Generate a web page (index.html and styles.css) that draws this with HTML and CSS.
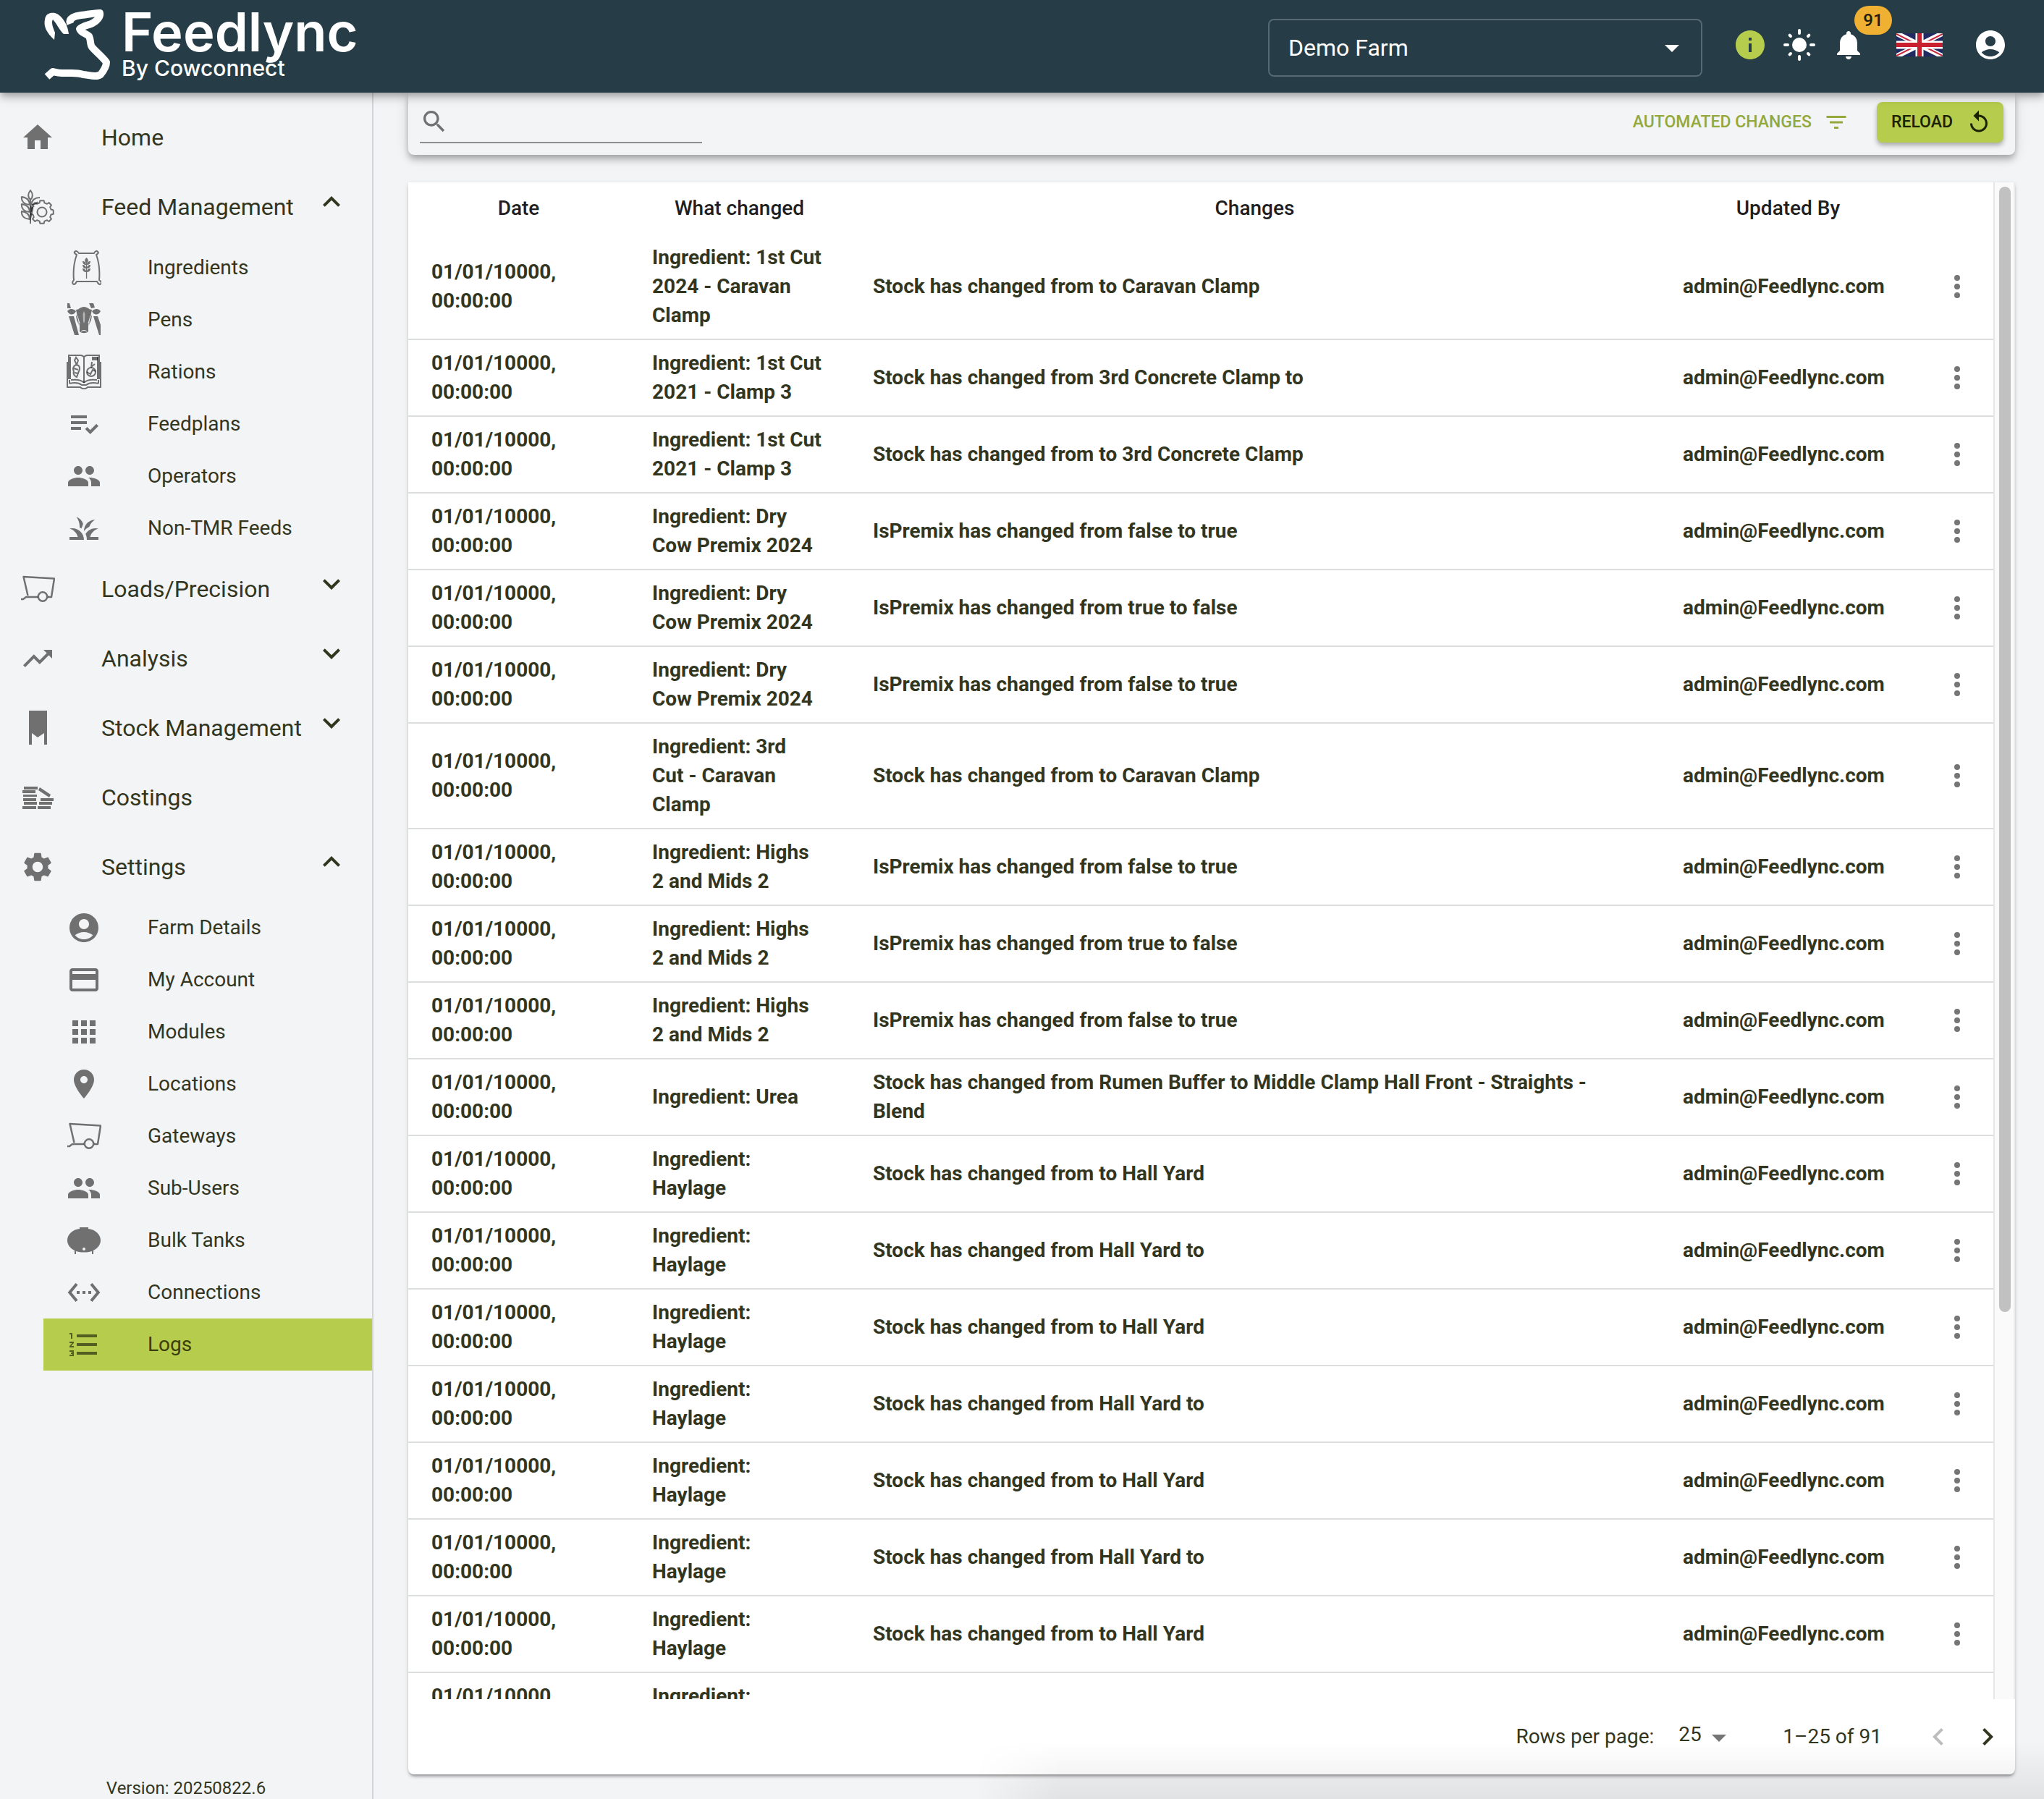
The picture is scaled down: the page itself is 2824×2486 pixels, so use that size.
FILE: index.html
```
<!DOCTYPE html>
<html lang="en">
<head>
    <meta charset="UTF-8">
    <meta name="viewport" content="width=device-width, initial-scale=1.0">
    <title>Feedlync - Logs</title>
    <link rel="stylesheet" href="styles.css">
</head>
<body>
    <!-- Icon set, referenced with <use> -->
    <svg class="sprite" aria-hidden="true">
        <symbol id="i-home" viewBox="0 0 24 24"><path d="M10 20v-6h4v6h5v-8h3L12 3 2 12h3v8z"/></symbol>
        <symbol id="i-feed" viewBox="0 0 48 48">
            <g fill="none" stroke="currentColor" stroke-width="2" stroke-linejoin="round">
                <path d="M14 1c-4 5-4 9 0 13 4-4 4-8 0-13zM14 14v33M13 21C5 20 1 16 2 10c7 1 11 5 11 11zM13 31C5 30 1 26 2 20c7 1 11 5 11 11zM13 41C5 40 1 36 2 30c7 1 11 5 11 11zM15 21c1-6 5-10 12-10M15 21c4 0 7-1 9-4M15 31c0-3 1-6 3-7"/>
                <g transform="translate(30 31)">
                    <path stroke-width="2" d="M15.8-2.7V2.7L12.6 3.4 11.2 7 13 9.6 9.6 13 7 11.2 3.4 12.6 2.7 15.8H-2.7L-3.4 12.6-7 11.2-9.6 13-13 9.6-11.2 7-12.6 3.4-15.8 2.7M-11.2-7-13-9.6-9.6-13-7-11.2-3.4-12.6-2.7-15.8H2.7L3.4-12.6 7-11.2 9.6-13 13-9.6 11.2-7 12.6-3.4 15.8-2.7"/>
                    <circle r="6.5"/>
                </g>
            </g>
            <path d="M14 22c3 1 5 3 4 6l-2 8-2 8z"/>
        </symbol>
        <symbol id="i-sack" viewBox="0 0 48 48">
            <path fill="none" stroke="currentColor" stroke-width="2" stroke-linejoin="round" d="M17 4h21c1-3 4-4 5-2 2 1 0 3-2 4 4 11 5 24 4 35 3 2 4 5 1 6-2 0-3-2-4-4H14c-1 2-2 4-4 4-3-1-2-4 0-6-1-11 0-24 4-35-2-1-4-3-3-4 2-2 4-1 6 2z"/>
            <path d="M27.5 10c3 3 3 5 0 8-3-3-3-5 0-8zM26.9 18h1.3v21h-1.3zM22 15c3 0 5 2 5 5-3 0-5-2-5-5zM33 15c-3 0-5 2-5 5 3 0 5-2 5-5zM22 20c3 0 5 2 5 5-3 0-5-2-5-5zM33 20c-3 0-5 2-5 5 3 0 5-2 5-5zM22 25c3 0 5 2 5 5-3 0-5-2-5-5zM33 25c-3 0-5 2-5 5 3 0 5-2 5-5z"/>
        </symbol>
        <symbol id="i-cow" viewBox="0 0 48 48">
            <path d="M1 1h3l2 7H1zM31 1h6l2 6-5 1zM1 12c3-4 8-4 12 0-3 6-9 6-12 0zM47 12c-3-4-8-4-12 0 3 6 9 6 12 0zM3 19h7l7 26h-6zM37 19h6l4 12v14h-2zM13 10c4 0 6-4 11-4s7 4 11 4l-2 10-3 12v8c-3 3-9 3-12 0v-8l-3-12zM13 18l2 1 2 12-3-7zM35 18l-2 1-2 12 3-7z"/>
            <path class="cut" d="M24 12l1.5 4-.5 10-1 3-1-3-.5-10z"/>
            <path class="cut-line" d="M15 19l3 10M33 19l-3 10M20 40c2-2 6-2 8 0"/>
        </symbol>
        <symbol id="i-book" viewBox="0 0 48 48">
            <g fill="none" stroke="currentColor" stroke-width="2">
                <path d="M3 34V1h16c3 0 5 2 5 3 0-1 2-3 5-3h16v33M24 4v35M1 10v35h18c2 3 8 3 10 0h18V10M5 3v31M43 3v31"/>
                <path d="M24 39c-3-4-9-5-18-4M24 39c3-4 9-5 18-4M4 40c8-2 13-1 17 2h6c4-3 9-4 17-2M4 35v5M44 35v5"/>
                <path d="M13 14c5 0 6 5 4 9l-3 8c-4-2-5-5-4-8-2-3-1-7 3-9zM14 14l-3-6 2-4 3 4zM10 19l6 2M11 25l5 1"/>
                <circle cx="34" cy="24" r="6"/>
                <path d="M34 18l1-8M34 17l5-4M28 24l5 3 3-6 4 2"/>
            </g>
            <path d="M35 3h8v5h-8z"/>
        </symbol>
        <symbol id="i-plan" viewBox="0 0 24 24"><path d="M3 10h11v2H3zM3 6h11v2H3zM3 14h7v2H3zM20.59 11.93l-4.25 4.24-2.12-2.12-1.41 1.41L16.34 19 22 13.34z"/></symbol>
        <symbol id="i-people" viewBox="0 0 24 24"><path d="M16 11c1.66 0 2.99-1.34 2.99-3S17.66 5 16 5s-3 1.34-3 3 1.34 3 3 3zm-8 0c1.66 0 2.99-1.34 2.99-3S9.66 5 8 5 5 6.34 5 8s1.34 3 3 3zm0 2c-2.33 0-7 1.17-7 3.5V19h14v-2.5c0-2.33-4.67-3.5-7-3.5zm8 0c-.29 0-.62.02-.97.05 1.16.84 1.97 1.97 1.97 3.45V19h6v-2.5c0-2.33-4.67-3.5-7-3.5z"/></symbol>
        <symbol id="i-grass" viewBox="0 0 24 24"><path d="M12 20H2v-2h5.75C7.02 15.19 4.81 12.99 2 12.26 2.64 12.1 3.31 12 4 12c4.42 0 8 3.58 8 8zm10-7.74C21.36 12.1 20.69 12 20 12c-2.93 0-5.48 1.58-6.88 3.93.6 1.25.87 2.65.87 4.07h8v-2h-5.75c.74-2.81 2.95-5.01 5.76-5.74zM15.64 11.02c.78-2.09 2.23-3.84 4.09-5C15.44 6.16 12 9.67 12 14v.02c.95-1.27 2.2-2.3 3.64-3zM11.42 8.85C10.58 6.66 8.88 4.89 6.7 4 8.14 5.86 9 8.18 9 10.71c0 .21-.03.41-.04.61.43.24.83.52 1.22.82.39-.96.86-1.87 1.24-3.29z"/></symbol>
        <symbol id="i-wagon" viewBox="0 0 48 48">
            <g fill="none" stroke="currentColor" stroke-width="2.5" stroke-linejoin="round">
                <path d="M10.500 33L4.500 7 47 9.500 43 35h-5M1 38h3l4-3h16"/>
                <circle cx="31" cy="34.5" r="6.2"/>
            </g>
        </symbol>
        <symbol id="i-trend" viewBox="0 0 24 24"><path d="M16 6l2.29 2.29-4.88 4.88-4-4L2 16.59 3.41 18l6-6 4 4 6.3-6.29L22 12V6z"/></symbol>
        <symbol id="i-stock" viewBox="0 0 48 48"><path d="M12 0h25v47h-4V31l-9 6-8-6v16h-4z"/></symbol>
        <symbol id="i-costs" viewBox="0 0 48 48">
            <path d="M5 9h19v4H5zM3 14h18v4H3zM4 20h19v3H4zM4 25h18v4H4zM5 30h18v4H5zM3 36h19v4H3zM28 25h18v4H28zM26 30h18v4H26zM24 36h18v4H24zM27 10l15 10-2 4-15-10z"/>
        </symbol>
        <symbol id="i-gear" viewBox="0 0 24 24"><path d="M19.14 12.94c.04-.3.06-.61.06-.94s-.02-.64-.07-.94l2.03-1.58c.18-.14.23-.41.12-.61l-1.92-3.32c-.12-.22-.37-.29-.59-.22l-2.39.96c-.5-.38-1.03-.7-1.62-.94l-.36-2.54c-.04-.24-.24-.41-.48-.41h-3.84c-.24 0-.43.17-.47.41l-.36 2.54c-.59.24-1.13.57-1.62.94l-2.39-.96c-.22-.08-.47 0-.59.22L2.74 8.87c-.12.21-.08.47.12.61l2.03 1.58c-.05.3-.09.63-.09.94s.02.64.07.94l-2.03 1.58c-.18.14-.23.41-.12.61l1.92 3.32c.12.22.37.29.59.22l2.39-.96c.5.38 1.03.7 1.62.94l.36 2.54c.05.24.24.41.48.41h3.84c.24 0 .44-.17.47-.41l.36-2.54c.59-.24 1.13-.56 1.62-.94l2.39.96c.22.08.47 0 .59-.22l1.92-3.32c.12-.22.07-.47-.12-.61l-2.01-1.58zM12 15.6c-1.98 0-3.6-1.62-3.6-3.6s1.62-3.6 3.6-3.6 3.6 1.62 3.6 3.6-1.62 3.6-3.6 3.6z"/></symbol>
        <symbol id="i-user" viewBox="0 0 24 24"><path d="M12 2C6.48 2 2 6.48 2 12s4.48 10 10 10 10-4.48 10-10S17.52 2 12 2zm0 4c1.93 0 3.5 1.57 3.5 3.5S13.93 13 12 13s-3.5-1.57-3.5-3.5S10.07 6 12 6zm0 14c-2.03 0-4.43-.82-6.14-2.88C7.55 15.8 9.68 15 12 15s4.45.8 6.14 2.12C16.43 19.18 14.03 20 12 20z"/></symbol>
        <symbol id="i-card" viewBox="0 0 24 24"><path d="M20 4H4c-1.11 0-1.99.89-1.99 2L2 18c0 1.11.89 2 2 2h16c1.11 0 2-.89 2-2V6c0-1.11-.89-2-2-2zm0 14H4v-6h16v6zm0-10H4V6h16v2z"/></symbol>
        <symbol id="i-apps" viewBox="0 0 24 24"><path d="M4 8h4V4H4zm6 12h4v-4h-4zm-6 0h4v-4H4zm0-6h4v-4H4zm6 0h4v-4h-4zm6-10v4h4V4zm-6 4h4V4h-4zm6 6h4v-4h-4zm0 6h4v-4h-4z"/></symbol>
        <symbol id="i-pin" viewBox="0 0 24 24"><path d="M12 2C8.13 2 5 5.13 5 9c0 5.25 7 13 7 13s7-7.75 7-13c0-3.87-3.13-7-7-7zm0 9.500c-1.38 0-2.5-1.12-2.5-2.5s1.12-2.5 2.5-2.5 2.5 1.12 2.5 2.5-1.12 2.5-2.5 2.5z"/></symbol>
        <symbol id="i-tank" viewBox="0 0 48 48"><path fill-rule="evenodd" d="M18 6h12v2c10 1 17 8 17 16 0 6-4 11-10 14v5h-2v-4c-7 2-15 2-22 0v4h-2v-5C5 35 1 30 1 24 1 16 8 9 18 8zM24 34a2 2 0 1 0 0 4 2 2 0 0 0 0-4z"/></symbol>
        <symbol id="i-link" viewBox="0 0 24 24"><path d="M7.77 6.76L6.23 5.48.82 12l5.41 6.52 1.54-1.28L3.42 12zM7 13h2v-2H7zm10-2h-2v2h2zm-6 2h2v-2h-2zm6.77-7.52l-1.54 1.28L20.58 12l-4.35 5.24 1.54 1.28L23.18 12z"/></symbol>
        <symbol id="i-list" viewBox="0 0 24 24"><path d="M2 17h2v.5H3v1h1v.5H2v1h3v-4H2zm1-9h1V4H2v1h1zm-1 3h1.8L2 13.1v.9h3v-1H3.2L5 10.9V10H2zm5-6v2h14V5zm0 14h14v-2H7zm0-6h14v-2H7z"/></symbol>
        <symbol id="i-up" viewBox="0 0 24 24"><path d="M12 8l-6 6 1.41 1.41L12 10.83l4.59 4.58L18 14z"/></symbol>
        <symbol id="i-down" viewBox="0 0 24 24"><path d="M16.59 8.59L12 13.17 7.41 8.59 6 10l6 6 6-6z"/></symbol>
        <symbol id="i-left" viewBox="0 0 24 24"><path d="M15.41 7.41L14 6l-6 6 6 6 1.41-1.41L10.83 12z"/></symbol>
        <symbol id="i-right" viewBox="0 0 24 24"><path d="M10 6L8.59 7.41 13.17 12l-4.58 4.59L10 18l6-6z"/></symbol>
        <symbol id="i-drop" viewBox="0 0 24 24"><path d="M7 10l5 5 5-5z"/></symbol>
        <symbol id="i-info" viewBox="0 0 24 24"><path d="M12 2C6.48 2 2 6.48 2 12s4.48 10 10 10 10-4.48 10-10S17.52 2 12 2zm1 15h-2v-6h2zm0-8h-2V7h2z"/></symbol>
        <symbol id="i-sun" viewBox="0 0 24 24">
            <circle cx="12" cy="12" r="5"/>
            <path fill="none" stroke="currentColor" stroke-width="2" stroke-linecap="round" d="M12 2v2M12 20v2M2 12h2M20 12h2M5.3 5.3l.7.7M18 18l.7.7M5.3 18.7l.7-.7M18 6l.7-.7"/>
        </symbol>
        <symbol id="i-bell" viewBox="0 0 24 24"><path d="M12 22c1.1 0 2-.9 2-2h-4c0 1.1.89 2 2 2zm6-6v-5c0-3.07-1.64-5.64-4.5-6.32V4c0-.83-.67-1.5-1.5-1.5s-1.5.67-1.5 1.5v.68C7.63 5.36 6 7.92 6 11v5l-2 2v1h16v-1z"/></symbol>
        <symbol id="i-search" viewBox="0 0 24 24"><path d="M15.5 14h-.79l-.28-.27C15.41 12.59 16 11.11 16 9.5 16 5.91 13.09 3 9.5 3S3 5.91 3 9.5 5.91 16 9.5 16c1.61 0 3.09-.59 4.23-1.57l.27.28v.79l5 4.99L20.49 19zm-6 0C7.01 14 5 11.99 5 9.5S7.01 5 9.5 5 14 7.01 14 9.5 11.99 14 9.5 14z"/></symbol>
        <symbol id="i-filter" viewBox="0 0 24 24"><path d="M10 18h4v-2h-4zM3 6v2h18V6zm3 7h12v-2H6z"/></symbol>
        <symbol id="i-reload" viewBox="0 0 24 24"><path d="M12 5V1L7 6l5 5V7c3.31 0 6 2.69 6 6s-2.69 6-6 6-6-2.69-6-6H4c0 4.42 3.58 8 8 8s8-3.58 8-8-3.58-8-8-8z"/></symbol>
        <symbol id="i-more" viewBox="0 0 24 24"><circle cx="12" cy="6" r="2"/><circle cx="12" cy="12" r="2"/><circle cx="12" cy="18" r="2"/></symbol>
    </svg>

    <header class="topbar">
        <a class="brand" href="#" aria-label="Feedlync home">
            <svg class="brand-mark" viewBox="60 12 96 100" aria-hidden="true">
                <path d="M75 55C64 45 60 36 62 27c1-8 7-10 14-9 10 3 18 17 19 29h-7c-6-5-9-14-15-20-2 3-1 9 3 18z"/>
                <path class="brand-line" d="M97 33c-3-8 7-11 15-12 10-1 18-3 26-3 1 5-4 11-10 14-6 3-14 4-18 8 2 6 9 6 13 10 3 6 1 11 4 15 6 7 14 13 20 21 0 6-4 12-8 17-5 4-15 1-24 0-15-5-25 1-42-4l-8 7"/>
            </svg>
            <span class="brand-text">
                <span class="brand-name">Feedlync</span>
                <span class="brand-sub">By Cowconnect</span>
            </span>
        </a>
        <div class="farm-select">
            <select aria-label="Farm">
                <option>Demo Farm</option>
            </select>
            <svg class="icon" aria-hidden="true"><use href="#i-drop"/></svg>
        </div>
        <div class="top-actions">
            <div class="action-group">
                <button class="icon-btn info" aria-label="Information"><svg class="icon"><use href="#i-info"/></svg></button>
                <button class="icon-btn" aria-label="Theme"><svg class="icon"><use href="#i-sun"/></svg></button>
                <button class="icon-btn" aria-label="Notifications"><svg class="icon"><use href="#i-bell"/></svg><span class="badge">91</span></button>
            </div>
            <button class="icon-btn" aria-label="Language">
                <svg class="flag" viewBox="0 0 64 32">
                    <path fill="#1f2a63" d="M0 0h64v32H0z"/>
                    <path stroke="#fff" stroke-width="7" d="M0 0l64 32M64 0L0 32"/>
                    <path stroke="#c8283c" stroke-width="2" d="M0 1l28 14M64 1L38 14M36 17l28 14M28 17L0 31"/>
                    <path stroke="#fff" stroke-width="11" d="M32 0v32M0 16h64"/>
                    <path stroke="#c8202f" stroke-width="6" d="M32 0v32M0 16h64"/>
                </svg>
            </button>
            <button class="icon-btn" aria-label="Profile"><svg class="icon"><use href="#i-user"/></svg></button>
        </div>
    </header>

    <div class="layout">
        <nav class="sidebar">
            <ul class="menu">
                <li><a class="item" href="#"><svg class="icon"><use href="#i-home"/></svg><span>Home</span></a></li>
                <li>
                    <a class="item" href="#"><svg class="icon"><use href="#i-feed"/></svg><span>Feed Management</span><svg class="icon chevron"><use href="#i-up"/></svg></a>
                    <ul class="submenu">
                        <li><a href="#"><svg class="icon"><use href="#i-sack"/></svg>Ingredients</a></li>
                        <li><a href="#"><svg class="icon"><use href="#i-cow"/></svg>Pens</a></li>
                        <li><a href="#"><svg class="icon"><use href="#i-book"/></svg>Rations</a></li>
                        <li><a href="#"><svg class="icon"><use href="#i-plan"/></svg>Feedplans</a></li>
                        <li><a href="#"><svg class="icon"><use href="#i-people"/></svg>Operators</a></li>
                        <li><a href="#"><svg class="icon"><use href="#i-grass"/></svg>Non-TMR Feeds</a></li>
                    </ul>
                </li>
                <li><a class="item" href="#"><svg class="icon"><use href="#i-wagon"/></svg><span>Loads/Precision</span><svg class="icon chevron"><use href="#i-down"/></svg></a></li>
                <li><a class="item" href="#"><svg class="icon"><use href="#i-trend"/></svg><span>Analysis</span><svg class="icon chevron"><use href="#i-down"/></svg></a></li>
                <li><a class="item" href="#"><svg class="icon"><use href="#i-stock"/></svg><span>Stock Management</span><svg class="icon chevron"><use href="#i-down"/></svg></a></li>
                <li><a class="item" href="#"><svg class="icon"><use href="#i-costs"/></svg><span>Costings</span></a></li>
                <li>
                    <a class="item" href="#"><svg class="icon"><use href="#i-gear"/></svg><span>Settings</span><svg class="icon chevron"><use href="#i-up"/></svg></a>
                    <ul class="submenu">
                        <li><a href="#"><svg class="icon"><use href="#i-user"/></svg>Farm Details</a></li>
                        <li><a href="#"><svg class="icon"><use href="#i-card"/></svg>My Account</a></li>
                        <li><a href="#"><svg class="icon"><use href="#i-apps"/></svg>Modules</a></li>
                        <li><a href="#"><svg class="icon"><use href="#i-pin"/></svg>Locations</a></li>
                        <li><a href="#"><svg class="icon"><use href="#i-wagon"/></svg>Gateways</a></li>
                        <li><a href="#"><svg class="icon"><use href="#i-people"/></svg>Sub-Users</a></li>
                        <li><a href="#"><svg class="icon"><use href="#i-tank"/></svg>Bulk Tanks</a></li>
                        <li><a href="#"><svg class="icon"><use href="#i-link"/></svg>Connections</a></li>
                        <li><a class="active" href="#"><svg class="icon"><use href="#i-list"/></svg>Logs</a></li>
                    </ul>
                </li>
            </ul>
            <p class="version">Version: 20250822.6</p>
        </nav>

        <main class="content">
            <div class="toolbar">
                <label class="search">
                    <svg class="icon"><use href="#i-search"/></svg>
                    <input type="text" aria-label="Search">
                </label>
                <div class="toolbar-actions">
                    <button class="btn-text">AUTOMATED CHANGES<svg class="icon"><use href="#i-filter"/></svg></button>
                    <button class="btn-reload">RELOAD<svg class="icon"><use href="#i-reload"/></svg></button>
                </div>
            </div>

            <section class="card">
                <div class="table-area">
                    <div class="table-scroll">
                        <table>
                            <colgroup>
                                <col class="col-date"><col class="col-what"><col><col class="col-user"><col class="col-menu">
                            </colgroup>
                            <thead>
                                <tr><th>Date</th><th>What changed</th><th>Changes</th><th>Updated By</th><th></th></tr>
                            </thead>
                            <tbody>
                                <tr><td>01/01/10000, 00:00:00</td><td>Ingredient: 1st Cut 2024 - Caravan Clamp</td><td>Stock has changed from to Caravan Clamp</td><td>admin@Feedlync.com</td><td><button aria-label="More"><svg class="icon"><use href="#i-more"/></svg></button></td></tr>
                                <tr><td>01/01/10000, 00:00:00</td><td>Ingredient: 1st Cut 2021 - Clamp 3</td><td>Stock has changed from 3rd Concrete Clamp to</td><td>admin@Feedlync.com</td><td><button aria-label="More"><svg class="icon"><use href="#i-more"/></svg></button></td></tr>
                                <tr><td>01/01/10000, 00:00:00</td><td>Ingredient: 1st Cut 2021 - Clamp 3</td><td>Stock has changed from to 3rd Concrete Clamp</td><td>admin@Feedlync.com</td><td><button aria-label="More"><svg class="icon"><use href="#i-more"/></svg></button></td></tr>
                                <tr><td>01/01/10000, 00:00:00</td><td>Ingredient: Dry Cow Premix 2024</td><td>IsPremix has changed from false to true</td><td>admin@Feedlync.com</td><td><button aria-label="More"><svg class="icon"><use href="#i-more"/></svg></button></td></tr>
                                <tr><td>01/01/10000, 00:00:00</td><td>Ingredient: Dry Cow Premix 2024</td><td>IsPremix has changed from true to false</td><td>admin@Feedlync.com</td><td><button aria-label="More"><svg class="icon"><use href="#i-more"/></svg></button></td></tr>
                                <tr><td>01/01/10000, 00:00:00</td><td>Ingredient: Dry Cow Premix 2024</td><td>IsPremix has changed from false to true</td><td>admin@Feedlync.com</td><td><button aria-label="More"><svg class="icon"><use href="#i-more"/></svg></button></td></tr>
                                <tr><td>01/01/10000, 00:00:00</td><td>Ingredient: 3rd<br>Cut - Caravan Clamp</td><td>Stock has changed from to Caravan Clamp</td><td>admin@Feedlync.com</td><td><button aria-label="More"><svg class="icon"><use href="#i-more"/></svg></button></td></tr>
                                <tr><td>01/01/10000, 00:00:00</td><td>Ingredient: Highs 2 and Mids 2</td><td>IsPremix has changed from false to true</td><td>admin@Feedlync.com</td><td><button aria-label="More"><svg class="icon"><use href="#i-more"/></svg></button></td></tr>
                                <tr><td>01/01/10000, 00:00:00</td><td>Ingredient: Highs 2 and Mids 2</td><td>IsPremix has changed from true to false</td><td>admin@Feedlync.com</td><td><button aria-label="More"><svg class="icon"><use href="#i-more"/></svg></button></td></tr>
                                <tr><td>01/01/10000, 00:00:00</td><td>Ingredient: Highs 2 and Mids 2</td><td>IsPremix has changed from false to true</td><td>admin@Feedlync.com</td><td><button aria-label="More"><svg class="icon"><use href="#i-more"/></svg></button></td></tr>
                                <tr><td>01/01/10000, 00:00:00</td><td>Ingredient: Urea</td><td>Stock has changed from Rumen Buffer to Middle Clamp Hall Front - Straights - Blend</td><td>admin@Feedlync.com</td><td><button aria-label="More"><svg class="icon"><use href="#i-more"/></svg></button></td></tr>
                                <tr><td>01/01/10000, 00:00:00</td><td>Ingredient: Haylage</td><td>Stock has changed from to Hall Yard</td><td>admin@Feedlync.com</td><td><button aria-label="More"><svg class="icon"><use href="#i-more"/></svg></button></td></tr>
                                <tr><td>01/01/10000, 00:00:00</td><td>Ingredient: Haylage</td><td>Stock has changed from Hall Yard to</td><td>admin@Feedlync.com</td><td><button aria-label="More"><svg class="icon"><use href="#i-more"/></svg></button></td></tr>
                                <tr><td>01/01/10000, 00:00:00</td><td>Ingredient: Haylage</td><td>Stock has changed from to Hall Yard</td><td>admin@Feedlync.com</td><td><button aria-label="More"><svg class="icon"><use href="#i-more"/></svg></button></td></tr>
                                <tr><td>01/01/10000, 00:00:00</td><td>Ingredient: Haylage</td><td>Stock has changed from Hall Yard to</td><td>admin@Feedlync.com</td><td><button aria-label="More"><svg class="icon"><use href="#i-more"/></svg></button></td></tr>
                                <tr><td>01/01/10000, 00:00:00</td><td>Ingredient: Haylage</td><td>Stock has changed from to Hall Yard</td><td>admin@Feedlync.com</td><td><button aria-label="More"><svg class="icon"><use href="#i-more"/></svg></button></td></tr>
                                <tr><td>01/01/10000, 00:00:00</td><td>Ingredient: Haylage</td><td>Stock has changed from Hall Yard to</td><td>admin@Feedlync.com</td><td><button aria-label="More"><svg class="icon"><use href="#i-more"/></svg></button></td></tr>
                                <tr><td>01/01/10000, 00:00:00</td><td>Ingredient: Haylage</td><td>Stock has changed from to Hall Yard</td><td>admin@Feedlync.com</td><td><button aria-label="More"><svg class="icon"><use href="#i-more"/></svg></button></td></tr>
                                <tr><td>01/01/10000, 00:00:00</td><td>Ingredient: Haylage</td><td></td><td></td><td></td></tr>
                            </tbody>
                        </table>
                    </div>
                    <div class="scrollbar"><div class="thumb"></div></div>
                </div>
                <div class="pagination">
                    <label for="rows">Rows per page:</label>
                    <div class="rows-select">
                        <select id="rows">
                            <option>25</option>
                        </select>
                        <svg class="icon" aria-hidden="true"><use href="#i-drop"/></svg>
                    </div>
                    <span class="range">1–25 of 91</span>
                    <div class="pager">
                        <button disabled aria-label="Previous page"><svg class="icon"><use href="#i-left"/></svg></button>
                        <button aria-label="Next page"><svg class="icon"><use href="#i-right"/></svg></button>
                    </div>
                </div>
            </section>
        </main>
    </div>
</body>
</html>
```
FILE: styles.css
```
* {
    box-sizing: border-box;
}
body {
    margin: 0;
    height: 100vh;
    display: flex;
    flex-direction: column;
    overflow: hidden;
    font-family: Roboto, "Liberation Sans", sans-serif;
    font-size: 28px;
    line-height: 40px;
    color: #33361f;
    background-color: #f3f4f6;
}
button, select, input {
    font: inherit;
    color: inherit;
    background: none;
    border: none;
    padding: 0;
}
button {
    display: flex;
    align-items: center;
    cursor: pointer;
}
a {
    color: inherit;
    text-decoration: none;
}
ul {
    list-style: none;
    margin: 0;
    padding: 0;
}
select {
    appearance: none;
}
.sprite {
    position: absolute;
    width: 0;
    height: 0;
}
.icon {
    width: 48px;
    height: 48px;
    flex: none;
    fill: currentColor;
}
.cut {
    fill: #b4b5b6;
}
.cut-line {
    fill: none;
    stroke: #f3f4f6;
}

/* Top bar */
.topbar {
    position: relative;
    z-index: 2;
    flex: none;
    height: 128px;
    display: flex;
    align-items: center;
    padding: 0 50px 0 60px;
    background-color: #263d47;
    color: #fff;
    box-shadow: 0 4px 8px -2px rgba(0,0,0,0.2), 0 8px 10px rgba(0,0,0,0.14), 0 2px 20px rgba(0,0,0,0.12);
}
.brand {
    display: flex;
    gap: 12px;
    height: 104px;
    margin-right: auto;
}
.brand-mark {
    width: 96px;
    height: 100px;
    fill: #fff;
}
.brand-line {
    fill: none;
    stroke: #fff;
    stroke-width: 10;
    stroke-linejoin: round;
}
.brand-text {
    display: flex;
    flex-direction: column;
    font-family: Inter, sans-serif;
    font-weight: 500;
}
.brand-name {
    font-size: 74px;
    line-height: 64px;
    font-weight: 600;
}
.brand-sub {
    font-size: 30px;
    line-height: 36px;
}
.farm-select {
    position: relative;
    width: 600px;
    margin: 4px 42px 0 0;
}
.farm-select select {
    width: 100%;
    height: 80px;
    padding: 0 26px;
    font-size: 32px;
    border: 2px solid #566871;
    border-radius: 8px;
}
.farm-select .icon {
    position: absolute;
    right: 18px;
    top: 16px;
    pointer-events: none;
}
.top-actions {
    display: flex;
    align-items: center;
    gap: 42px;
    margin-bottom: 4px;
}
.action-group {
    display: flex;
    gap: 20px;
}
.icon-btn {
    position: relative;
}
.info {
    color: #b6cc4c;
}
.badge {
    position: absolute;
    left: 32px;
    top: -30px;
    width: 52px;
    height: 40px;
    border-radius: 20px;
    background-color: #f0b032;
    color: #221c08;
    font-size: 24px;
    font-weight: 500;
    text-align: center;
}
.flag {
    width: 64px;
    height: 32px;
}

/* Sidebar */
.layout {
    flex: 1;
    min-height: 0;
    display: flex;
}
.sidebar {
    width: 516px;
    flex: none;
    display: flex;
    flex-direction: column;
    justify-content: space-between;
    padding-top: 14px;
    border-right: 2px solid #d2d4d7;
}
.item {
    display: flex;
    align-items: center;
    height: 96px;
    padding: 0 32px 0 28px;
    font-size: 32px;
}
.item span {
    margin: 0 auto 0 64px;
}
.item .icon, .submenu .icon {
    color: rgba(0,0,0,0.54);
}
.item .chevron {
    color: #33361f;
    margin-bottom: 14px;
}
.submenu a {
    display: flex;
    align-items: center;
    gap: 64px;
    height: 72px;
    margin-left: 60px;
    padding-left: 32px;
}
.submenu .active {
    background-color: #b6cc4c;
    color: #3a400d;
}
.version {
    margin: 0;
    font-size: 24px;
    line-height: 30px;
    text-align: center;
}

/* Toolbar */
.content {
    position: relative;
    flex: 1;
    min-width: 0;
    display: flex;
    flex-direction: column;
    padding: 0 40px 34px 48px;
}
/* soft shade along the bottom edge */
.content::after {
    content: "";
    position: absolute;
    left: 36%;
    right: 0;
    bottom: 0;
    height: 80px;
    background: linear-gradient(to bottom, rgba(0,0,0,0), rgba(0,0,0,0.07));
    mask-image: linear-gradient(to right, transparent, #000 120px);
    pointer-events: none;
}
.toolbar {
    display: flex;
    justify-content: space-between;
    align-items: center;
    padding: 12px 16px 16px;
    margin-bottom: 38px;
    border-radius: 0 0 8px 8px;
    box-shadow: 0 4px 8px -2px rgba(0,0,0,0.2), 0 8px 10px rgba(0,0,0,0.14), 0 2px 20px rgba(0,0,0,0.12);
}
.search {
    display: flex;
    align-items: center;
    width: 390px;
    height: 58px;
    border-bottom: 2px solid #8d8f91;
    color: #707172;
}
.search .icon {
    width: 40px;
    height: 40px;
}
.search input {
    flex: 1;
    min-width: 0;
    outline: none;
}
.toolbar-actions {
    display: flex;
    gap: 38px;
    font-size: 23px;
    font-weight: 500;
}
.toolbar-actions .icon {
    width: 36px;
    height: 36px;
}
.btn-text {
    gap: 16px;
    color: #94a93c;
}
.btn-reload {
    height: 56px;
    gap: 18px;
    padding: 0 16px 0 20px;
    border-radius: 8px;
    background-color: #b6cc4c;
    color: #1c2004;
    box-shadow: 0 4px 6px rgba(0,0,0,0.3);
}

/* Log table */
.card {
    flex: 1;
    min-height: 0;
    display: flex;
    flex-direction: column;
    background-color: #fff;
    border-radius: 0 0 8px 8px;
    box-shadow: 0 4px 4px -2px rgba(0,0,0,0.4), 0 2px 6px rgba(0,0,0,0.12);
}
.table-area {
    flex: 1;
    min-height: 0;
    display: flex;
}
.table-scroll {
    flex: 1;
    overflow: hidden;
}
table {
    width: 100%;
    table-layout: fixed;
    border-collapse: separate;
    border-spacing: 0;
}
.col-date, .col-what {
    width: 305px;
}
.col-user {
    width: 355px;
}
.col-menu {
    width: 106px;
}
th {
    height: 72px;
    padding: 0;
    font-weight: 500;
    color: #1f1f1f;
}
td {
    padding: 12px 32px;
    border-bottom: 2px solid #dcdddd;
    font-weight: 700;
}
td:nth-child(2) {
    padding-right: 36px;
}
td:last-child {
    padding: 0 0 0 32px;
}
td button {
    color: #757575;
}
.scrollbar {
    width: 30px;
    padding: 6px;
    background-color: #fafafa;
    border-left: 2px solid #e7e7e7;
    border-right: 2px solid #ececec;
}
.thumb {
    width: 16px;
    height: calc(75% - 8px);
    border-radius: 8px;
    background-color: #c1c1c1;
}

/* Pagination */
.pagination {
    display: flex;
    align-items: center;
    justify-content: flex-end;
    height: 104px;
    padding-right: 14px;
}
.rows-select {
    position: relative;
    margin: 0 64px 6px 34px;
}
.rows-select select {
    width: 80px;
    height: 48px;
}
.rows-select .icon {
    position: absolute;
    right: 0;
    top: 4px;
    color: #757575;
    pointer-events: none;
}
.pager {
    display: flex;
    gap: 20px;
    margin-left: 54px;
}
.pager button:disabled {
    color: #bdbdbd;
}
```
